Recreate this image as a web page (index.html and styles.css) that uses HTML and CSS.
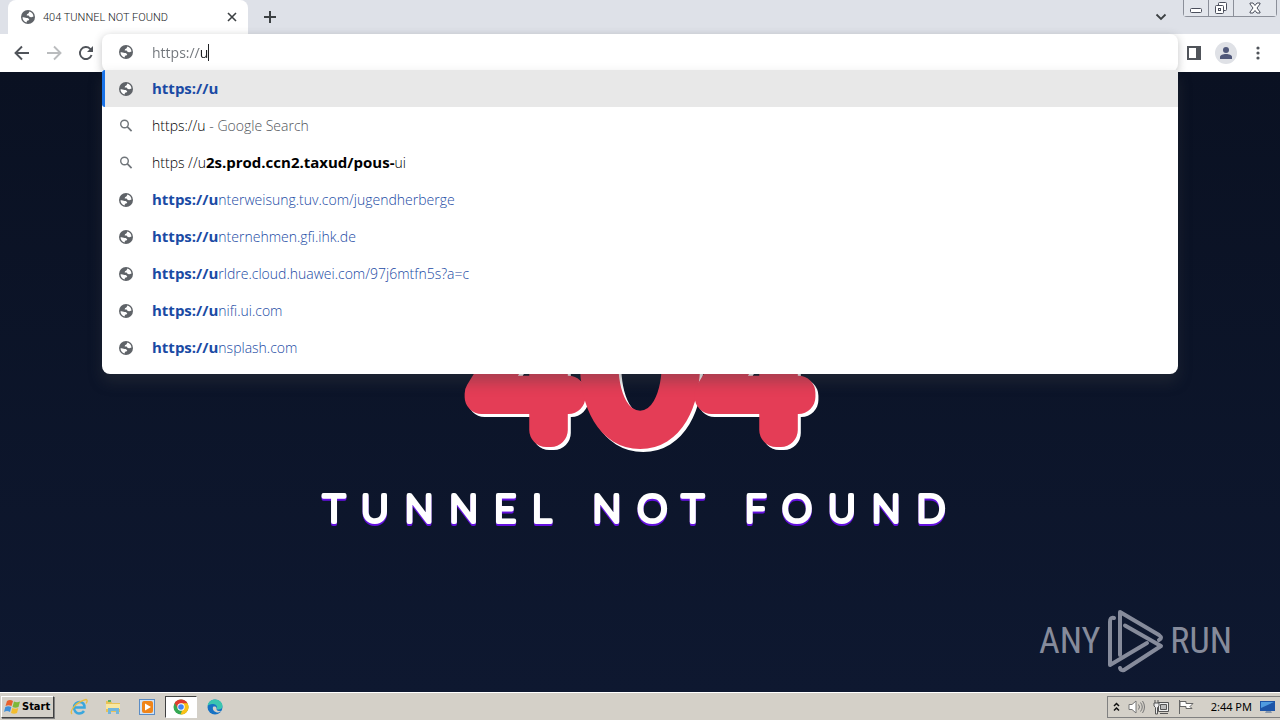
FILE: index.html
```html
<!DOCTYPE html>
<html lang="en">
<head>
  <meta charset="UTF-8">
  <meta name="viewport" content="width=device-width, initial-scale=1.0">
  <title>404 TUNNEL NOT FOUND</title>
  <link rel="stylesheet" href="styles.css">
</head>
<body>

  <!-- shared icons -->
  <svg class="sprite" aria-hidden="true">
    <symbol id="globe" viewBox="0 0 14 14">
      <circle cx="7" cy="7" r="7" fill="#5f6368"/>
      <path fill="#fff" d="M1.500 7.300C3.500 6.800 5 8 6.700 8L8.300 9.200 7.400 10.500 6 10.800 5.600 12.400C3 11.800 1.500 9.800 1.500 7.300z"/>
      <path fill="#fff" d="M8.400 1.600 7.600 3.200 6 4.200 5.700 5.400 7.600 5.600 8.800 7 10.400 7.300 12.500 6.600C12.300 4 10.800 2.200 8.400 1.600z"/>
    </symbol>
    <symbol id="search" viewBox="0 0 14 14">
      <circle cx="5.500" cy="5" r="3.800" fill="none" stroke="#70757a" stroke-width="1.400"/>
      <path d="m8.200 7.700 4.400 4.400" stroke="#70757a" stroke-width="1.700"/>
    </symbol>
  </svg>

  <header class="tabstrip">
    <div class="tab">
      <svg class="icon"><use href="#globe"/></svg>
      <span class="tab-title">404 TUNNEL NOT FOUND</span>
      <button class="plain" aria-label="Close tab">
        <svg width="10" height="10" viewBox="0 0 10 10"><path d="m1 1 8 8M9 1 1 9" stroke="#3c4043" stroke-width="1.600"/></svg>
      </button>
    </div>
    <button class="plain new-tab" aria-label="New tab">
      <svg width="14" height="14" viewBox="0 0 14 14"><path d="M7 1v12M1 7h12" stroke="#3c4043" stroke-width="2"/></svg>
    </button>
    <button class="plain tab-search" aria-label="Search tabs">
      <svg width="12" height="8" viewBox="0 0 12 8"><path d="m1.500 1.500 4.500 4.500 4.500-4.500" fill="none" stroke="#3c4043" stroke-width="1.800"/></svg>
    </button>
    <div class="window-controls">
      <button aria-label="Minimize">
        <svg width="14" height="12" viewBox="0 0 14 12"><rect x="1.500" y="6.500" width="11" height="4" rx="1" fill="#fff" stroke="#4b4f5c"/></svg>
      </button>
      <button aria-label="Restore">
        <svg width="14" height="14" viewBox="0 0 14 14" fill="#fff" stroke="#4b4f5c"><rect x="4.500" y="1.500" width="8" height="8" rx="1"/><rect x="1.500" y="4.500" width="8" height="8" rx="1"/><rect x="4.500" y="7.500" width="2" height="2"/></svg>
      </button>
      <button class="wide" aria-label="Close">
        <svg width="12" height="12" viewBox="0 0 12 12"><path d="M1 1h3l2 2.500L8 1h3v1L8 6l3 4v1H8L6 8.500 4 11H1v-1l3-4-3-4z" fill="#fff" stroke="#4b4f5c"/></svg>
      </button>
    </div>
  </header>

  <nav class="toolbar">
    <div class="nav-buttons">
      <button class="plain" aria-label="Back">
        <svg width="16" height="16" viewBox="0 0 16 16"><path d="M15 8H2M8 1.500 1.500 8 8 14.500" fill="none" stroke="#50545a" stroke-width="1.900"/></svg>
      </button>
      <button class="plain" aria-label="Forward">
        <svg width="16" height="16" viewBox="0 0 16 16"><path d="M1 8h13M8 1.500 14.500 8 8 14.500" fill="none" stroke="#babcbe" stroke-width="1.900"/></svg>
      </button>
      <button class="plain" aria-label="Reload">
        <svg width="16" height="16" viewBox="0 0 16 16"><path d="M13.600 10A6 6 0 1 1 12.200 3.800L13 4.600" fill="none" stroke="#50545a" stroke-width="1.900"/><path d="M15 1v6H9z" fill="#50545a"/></svg>
      </button>
    </div>

    <div class="omnibox">
      <label class="address">
        <svg class="icon"><use href="#globe"/></svg>
        <input type="text" value="https://u" aria-label="Address and search bar">
      </label>
      <ul class="suggestions">
        <li class="selected"><svg class="icon"><use href="#globe"/></svg><a href="#"><b>https://u</b></a></li>
        <li><svg class="icon"><use href="#search"/></svg><a href="#" class="query">https://u <span class="hint">- Google Search</span></a></li>
        <li><svg class="icon"><use href="#search"/></svg><a href="#" class="query">https //u<b>2s.prod.ccn2.taxud/pous-</b>ui</a></li>
        <li><svg class="icon"><use href="#globe"/></svg><a href="#"><b>https://u</b>nterweisung.tuv.com/jugendherberge</a></li>
        <li><svg class="icon"><use href="#globe"/></svg><a href="#"><b>https://u</b>nternehmen.gfi.ihk.de</a></li>
        <li><svg class="icon"><use href="#globe"/></svg><a href="#"><b>https://u</b>rldre.cloud.huawei.com/97j6mtfn5s?a=c</a></li>
        <li><svg class="icon"><use href="#globe"/></svg><a href="#"><b>https://u</b>nifi.ui.com</a></li>
        <li><svg class="icon"><use href="#globe"/></svg><a href="#"><b>https://u</b>nsplash.com</a></li>
      </ul>
    </div>

    <div class="tool-buttons">
      <button class="plain" aria-label="Side panel">
        <svg width="14" height="14" viewBox="0 0 14 14"><path d="M0 0h14v14H0zM2 2v10h7V2z" fill="#50545a" fill-rule="evenodd"/></svg>
      </button>
      <button class="plain" aria-label="Profile">
        <svg width="22" height="22" viewBox="0 0 22 22"><circle cx="11" cy="11" r="11" fill="#dfe1e6"/><circle cx="11" cy="8" r="3" fill="#50587a"/><path d="M5 17v-2c0-2 3-3 6-3s6 1 6 3v2z" fill="#50587a"/></svg>
      </button>
      <button class="plain" aria-label="Menu">
        <svg width="14" height="14" viewBox="0 0 14 14" fill="#50545a"><circle cx="7" cy="2" r="1.600"/><circle cx="7" cy="7" r="1.600"/><circle cx="7" cy="12" r="1.600"/></svg>
      </button>
    </div>
  </nav>

  <main class="page">
    <svg class="error-text" width="640" height="300" viewBox="0 0 640 300" role="img">
      <text class="code" x="320" y="198">404</text>
      <text class="message" x="3" y="290">TUNNEL NOT FOUND</text>
    </svg>

    <div class="watermark">
      <span>ANY</span>
      <svg width="58" height="66" viewBox="0 0 58 66" fill="none" stroke="#868b9b" stroke-width="4" stroke-linejoin="round" stroke-linecap="round">
        <path d="M8 10C5 9 4 11 4 14v43l37-22"/>
        <path d="M14 47V4l39 23q4 3 0 5"/>
        <path d="M19 17.500 55 38 18 62q-3 1-4-2"/>
      </svg>
      <span>RUN</span>
    </div>
  </main>

  <footer class="taskbar">
    <button class="start">
      <svg width="17" height="16" viewBox="0 0 17 16">
        <path d="M3 2q3-2 6 0L7.500 7q-3-1.500-6 0z" fill="#e8602c"/>
        <path d="M10 2.500q3 1.500 6 0L14.500 8q-3 1.500-6 0z" fill="#7db83a"/>
        <path d="M1.300 8q3-1.500 6 0L6 13q-3-2-6 0z" fill="#3f8fd8"/>
        <path d="M8.300 9q3 1.500 6 0L13 14q-3 1.500-6 0z" fill="#f3bd2e"/>
      </svg>
      Start
    </button>
    <div class="launch">
      <button class="plain" aria-label="Internet Explorer">
        <svg width="18" height="18" viewBox="0 0 18 18" fill="none"><path d="M4 9.500h10.500C14.500 5.500 12 4 9.500 4S4 6 4 9.500 6.500 15.500 9 15.500c2.500 0 4-1 5-2.500" stroke="#3ba7dd" stroke-width="2.500"/><path d="M2 16C-1 13 6 4 16 1.500c2 .5 1 2.500 0 4" stroke="#e9bd3f" stroke-width="1.300"/></svg>
      </button>
      <button class="plain" aria-label="Explorer">
        <svg width="16" height="16" viewBox="0 0 16 16"><path d="M1 2h5l1 2h8v9H1z" fill="#e8c257"/><path d="M3 1h3v2H3z" fill="#5eae60"/><path d="M1 5h14v5H1z" fill="#f8e7a0"/><path d="M3 15V9h11v6h-3v-3H6v3z" fill="#72b6dc"/></svg>
      </button>
      <button class="plain" aria-label="Media Player">
        <svg width="16" height="16" viewBox="0 0 16 16"><rect x=".5" y=".5" width="15" height="15" fill="#cfe2f6" stroke="#5b8cc4"/><rect x="3" y="2" width="11" height="12" rx="2" fill="#f08519"/><path d="M6 4.500v7L12 8z" fill="#fff"/></svg>
      </button>
      <button class="plain active" aria-label="Chrome">
        <svg width="16" height="16" viewBox="0 0 16 16"><circle cx="8" cy="8" r="7.500" fill="#35a853"/><path d="M1.500 4.200A7.500 7.500 0 0 1 14.500 4.200L8 8z" fill="#e33b2e"/><path d="M14.500 4.200A7.500 7.500 0 0 1 7.500 15.500L10.500 8 8 4.200z" fill="#fbc116"/><path d="M1.500 4.200 5 9.500 8 8z" fill="#e33b2e"/><circle cx="8" cy="8" r="3.700" fill="#fff"/><circle cx="8" cy="8" r="2.800" fill="#4285f4"/></svg>
      </button>
      <button class="plain" aria-label="Edge">
        <svg width="16" height="16" viewBox="0 0 16 16"><circle cx="8" cy="8" r="7.500" fill="#1672c4"/><path d="M.6 7C1 3 4 .5 8 .5c4.500 0 7.500 3 7.500 6.500 0 2.500-2 3.500-4 3.500-1.500 0-2-.5-1.500-1.500C10.500 6.500 8 5 5.500 5 3 5 1.200 6 .6 7z" fill="#3ac5b0"/><path d="M6 8c-1 3 2 5.500 5 5.500 1.500 0 3-1 3.500-1.500-2 .5-5 0-5-2 .5-1-.5-2.500-1.500-2.500S6.200 7.500 6 8z" fill="#d4d0c8"/></svg>
      </button>
    </div>
    <div class="tray">
      <svg width="7" height="10" viewBox="0 0 7 10"><path d="m1 4 2.500-2.500L6 4M1 8.500 3.500 6 6 8.500" fill="none" stroke="#111" stroke-width="1.500"/></svg>
      <svg width="17" height="16" viewBox="0 0 17 16" fill="#fff" stroke="#777"><path d="M1 5.500h3L8 2v12l-4-3.500H1z"/><path d="M10.500 5.500q2 2.500 0 5M12.500 3.500q3.500 4.500 0 9M14.500 2q4 6 0 12" fill="none"/></svg>
      <svg width="17" height="16" viewBox="0 0 17 16" fill="#eee" stroke="#555"><path d="M5.500 3.500h10v9h-10z"/><path d="M7.500 5.500h6v5h-6z" fill="#bbb"/><path d="M7 14.500h8"/><path d="M2 1v3M5 1v3M1 4h5v3L4.500 8.500V15h-2V8.500L1 7z"/></svg>
      <svg width="17" height="16" viewBox="0 0 17 16" fill="#fff" stroke="#666"><path d="M1.500 1v14M2 2.500h6v2h7l-3 3 2 2H8v-2H2z"/></svg>
      <time>2:44 PM</time>
      <svg width="16" height="14" viewBox="0 0 16 14"><path d="M0 1h15v10H0z" fill="#1d55a8"/><path d="M1 2h13L1 8z" fill="#4f9be0"/><path d="M6 11h5l1 2H5z" fill="#8797ac"/></svg>
    </div>
  </footer>

</body>
</html>
```
FILE: styles.css
```css
* {
  box-sizing: border-box;
}

body {
  margin: 0;
  height: 100vh;
  display: flex;
  flex-direction: column;
  overflow: hidden;
  font-family: "Open Sans", "Noto Sans", sans-serif;
  font-size: 14px;
  color: #202124;
}

svg {
  display: block;
  flex: none;
}

button {
  font: inherit;
  padding: 0;
}

.sprite {
  position: absolute;
  width: 0;
  height: 0;
}

.icon {
  width: 14px;
  height: 14px;
}

.plain {
  display: flex;
  align-items: center;
  justify-content: center;
  border: 0;
  background: none;
}

/* tabs */
.tabstrip {
  display: flex;
  height: 34px;
  padding: 0 3px 0 8px;
  background: #dee1e8;
}

.tab {
  display: flex;
  align-items: center;
  gap: 8px;
  width: 240px;
  padding: 0 11px 0 13px;
  background: #fff;
  border-radius: 8px 8px 0 0;
  font-family: Roboto, sans-serif;
  font-size: 11px;
  font-weight: 300;
}

.tab-title {
  flex: 1;
}

.new-tab {
  width: 44px;
}

.tab-search {
  margin-left: auto;
  width: 44px;
}

.window-controls {
  display: flex;
  height: 17px;
  border: 1px solid #8b8f99;
  border-top: 0;
  border-radius: 0 0 4px 4px;
}

.window-controls button {
  display: flex;
  align-items: center;
  justify-content: center;
  width: 25px;
  border: 0;
  border-right: 1px solid #8b8f99;
  background: #e3e6ec;
}

.window-controls .wide {
  width: 42px;
  border-right: 0;
}

/* toolbar */
.toolbar {
  display: grid;
  grid-template-columns: 102px 1fr 102px;
  height: 38px;
  background: #fff;
}

.nav-buttons {
  display: flex;
  align-items: center;
  gap: 16px;
  padding-left: 14px;
}

.tool-buttons {
  display: flex;
  align-items: center;
  gap: 14px;
  padding-left: 9px;
}

.omnibox {
  position: relative;
  z-index: 1;
  border-radius: 8px;
  box-shadow: 0 2px 8px rgba(60, 64, 67, 0.3);
}

.address {
  display: flex;
  align-items: center;
  gap: 19px;
  height: 36px;
  padding-left: 17px;
}

.address input {
  flex: 1;
  height: 24px;
  padding: 0;
  border: 0;
  outline: 0;
  font: inherit;
  color: transparent;
  /* grey scheme, dark rest of the url, then the caret */
  background:
    linear-gradient(to right, #70757a 47px, #202124 47px),
    linear-gradient(#202124, #202124) 56px 50% / 1px 17px no-repeat;
  background-clip: text, border-box;
}

.suggestions {
  position: absolute;
  top: 36px;
  left: 0;
  right: 0;
  margin: 0;
  padding: 0 0 8px;
  list-style: none;
  background: #fff;
  border-radius: 0 0 8px 8px;
  box-shadow: 0 8px 14px rgba(60, 64, 67, 0.35);
}

.suggestions li {
  display: flex;
  align-items: center;
  gap: 19px;
  height: 37px;
  padding-left: 17px;
}

.suggestions .selected {
  background: #e8e8e8;
  border-left: 3px solid #1a73e8;
  border-radius: 3px 0 0 3px;
  padding-left: 14px;
}

.suggestions a {
  color: #1a4aa4;
  font-weight: 300;
  line-height: 19px;
  text-decoration: none;
}

.suggestions b {
  font-size: 15px;
  font-weight: 700;
  line-height: 1;
}

.suggestions .query {
  color: #000;
}

.suggestions .hint {
  color: #50545a;
}

/* page */
.page {
  position: relative;
  flex: 1;
  display: flex;
  align-items: center;
  justify-content: center;
  background: linear-gradient(#0a1122, #0e1830);
}

.code {
  font-family: Inter, Lato, sans-serif;
  font-size: 194px;
  font-weight: 100;
  text-anchor: middle;
  fill: #e43d56;
  stroke: #e43d56;
  stroke-width: 34px;
  stroke-linejoin: round;
  filter: drop-shadow(3px 3px 0 #fff);
}

.message {
  font-family: Lato, sans-serif;
  font-size: 38px;
  font-weight: 300;
  letter-spacing: 16px;
  fill: #fff;
  stroke: #fff;
  stroke-width: 4px;
  stroke-linejoin: round;
  filter: drop-shadow(0 2px 0 #6410e0);
}

.watermark {
  position: absolute;
  right: 48px;
  bottom: 18px;
  display: flex;
  align-items: center;
  gap: 6px;
  font-family: "Liberation Sans Narrow", "Roboto Condensed", "Liberation Sans", sans-serif;
  font-size: 36px;
  color: #868b9b;
}

/* taskbar */
.taskbar {
  display: flex;
  align-items: center;
  height: 28px;
  padding-left: 1px;
  background: #d4d0c8;
  border-top: 1px solid #fff;
}

.start {
  display: flex;
  align-items: center;
  gap: 1px;
  height: 22px;
  padding: 0 3px 0 2px;
  border: 1px solid;
  border-color: #fff #404040 #404040 #fff;
  background: #d4d0c8;
  box-shadow: 1px 1px 0 #808080;
  font-family: "DejaVu Sans Condensed", "DejaVu Sans", sans-serif;
  font-size: 11px;
  font-weight: bold;
  color: #000;
}

.launch {
  display: flex;
  margin-left: 9px;
}

.launch button {
  width: 32px;
  height: 22px;
  margin-right: 2px;
}

.launch .active {
  background: #fff;
  border: 1px solid;
  border-color: #404040 #fff #fff #404040;
}

.tray {
  display: flex;
  align-items: center;
  gap: 8px;
  height: 22px;
  margin-left: auto;
  padding: 0 4px 0 5px;
  border: 1px solid #808080;
  border-right: 0;
}

.tray time {
  margin-left: 8px;
  font-family: "Noto Sans", sans-serif;
  font-size: 11px;
  color: #000;
}
```
